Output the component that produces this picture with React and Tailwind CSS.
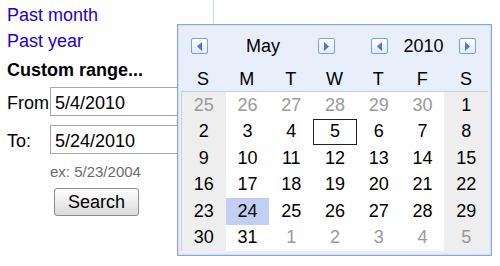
import React from "react";

const weeks = [
  [25, 26, 27, 28, 29, 30, 1],
  [2, 3, 4, 5, 6, 7, 8],
  [9, 10, 11, 12, 13, 14, 15],
  [16, 17, 18, 19, 20, 21, 22],
  [23, 24, 25, 26, 27, 28, 29],
  [30, 31, 1, 2, 3, 4, 5],
];

function ArrowButton({ dir }) {
  return (
    <div className="flex h-[16px] w-[17px] items-center justify-center rounded-[2px] border border-[#7d9de4] bg-gradient-to-b from-white to-[#e3eaf9]">
      <svg width="6" height="9" viewBox="0 0 6 9">
        {dir === "left" ? (
          <polygon points="5,0 5,9 0,4.5" fill="#4f74d2" />
        ) : (
          <polygon points="1,0 1,9 6,4.5" fill="#4f74d2" />
        )}
      </svg>
    </div>
  );
}

function Calendar() {
  return (
    <div className="absolute left-[177px] top-[24px] h-[232px] w-[315px] border border-[#88a5e6] bg-[#e8eefa] px-[3px] shadow-[inset_0_0_0_1px_#d3def6]">
      {/* Month / year nav */}
      <div className="mt-[13px] flex h-[16px] items-center">
        <div className="ml-[10px] flex w-[144px] items-center justify-between">
          <ArrowButton dir="left" />
          <span className="leading-[16px]">May</span>
          <ArrowButton dir="right" />
        </div>
        <div className="ml-[36px] flex w-[105px] items-center justify-between">
          <ArrowButton dir="left" />
          <span className="leading-[16px]">2010</span>
          <ArrowButton dir="right" />
        </div>
      </div>

      {/* Weekday header */}
      <div className="mt-[13px] grid h-[24px] w-[307px] grid-cols-7 text-center leading-[24px]">
        {["S", "M", "T", "W", "T", "F", "S"].map((d, i) => (
          <span key={i}>{d}</span>
        ))}
      </div>

      {/* Days */}
      <div className="grid w-[307px] grid-cols-7 border-l border-t border-[#c2d1ef] bg-white">
        {weeks.map((week, r) =>
          week.map((day, c) => {
            const other = (r === 0 && day > 20) || (r === 5 && day < 10);
            const weekend = c === 0 || c === 6;
            const today = r === 4 && c === 1;
            const selected = r === 1 && c === 3;
            let bg = "bg-white";
            if (weekend) bg = "bg-[#eeeeee]";
            if (today) bg = "bg-[#c3cff0]";
            return (
              <div
                key={r + "-" + c}
                className={
                  "flex h-[26.5px] items-center justify-center " +
                  bg +
                  (other ? " text-[#999999]" : " text-black") +
                  (selected ? " border border-[#222222]" : "")
                }
              >
                {day}
              </div>
            );
          })
        )}
      </div>
    </div>
  );
}

export default function App() {
  return (
    <div className="relative h-[266px] w-[500px] overflow-hidden bg-white font-['Liberation_Sans',Arial,sans-serif] text-[18px] text-black">
      <div className="pl-[7px] pt-[2px]">
        <div className="leading-[26px] text-[#2200cc]">Past month</div>
        <div className="leading-[26px] text-[#2200cc]">Past year</div>
        <div className="mt-[3px] font-bold leading-[26px]">Custom range...</div>

        <div className="mt-[4px] flex items-baseline">
          <span className="w-[43px] leading-[26px]">From</span>
          <input
            readOnly
            value="5/4/2010"
            className="h-[29px] w-[150px] border border-[#a3a8b0] pl-[4px] pt-[3px] text-[18px] text-black outline-none"
          />
        </div>

        <div className="mt-[9px] flex items-baseline">
          <span className="w-[43px] leading-[26px]">To:</span>
          <input
            readOnly
            value="5/24/2010"
            className="h-[29px] w-[150px] border border-[#a3a8b0] pl-[4px] pt-[3px] text-[18px] text-black outline-none"
          />
        </div>

        <div className="ml-[43px] mt-[9px] text-[15px] leading-[18px] text-[#6b6b6b]">
          ex: 5/23/2004
        </div>

        <button className="ml-[47px] mt-[7px] flex h-[28px] w-[85px] items-center justify-center rounded-[3px] border border-[#8c8c8c] bg-gradient-to-b from-white to-[#dadada] leading-[28px]">
          Search
        </button>
      </div>

      <div className="absolute left-[213px] top-0 h-[24px] w-px bg-[#c9d7f1]" />

      <Calendar />
    </div>
  );
}
